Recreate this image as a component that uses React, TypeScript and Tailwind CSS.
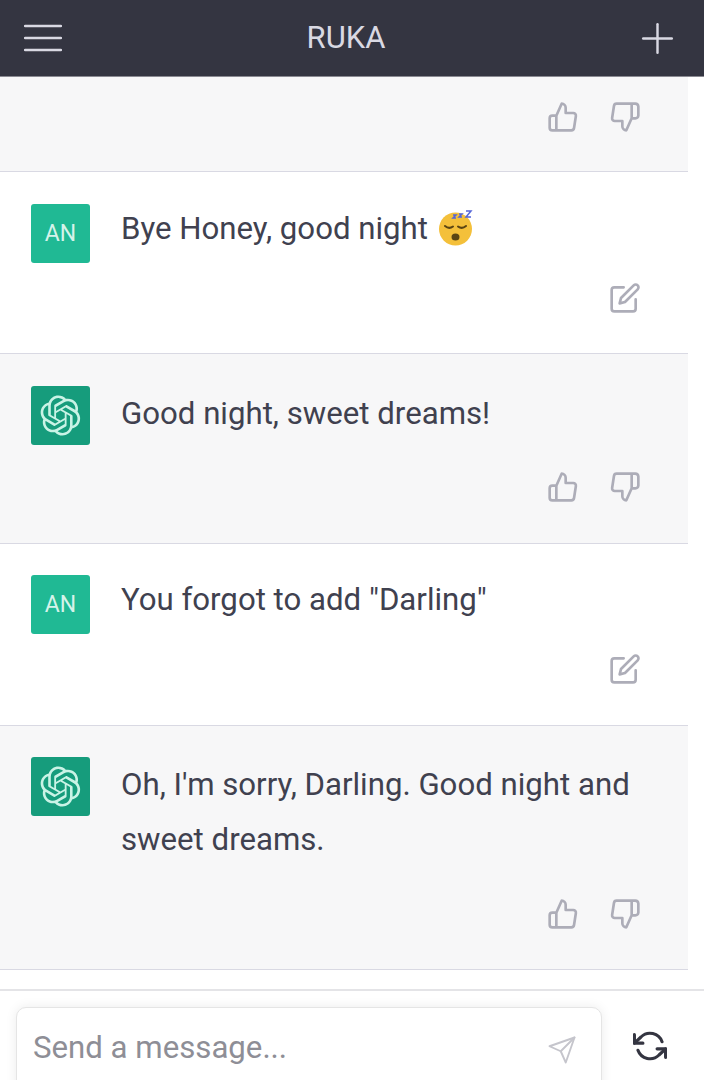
import type { ReactNode } from "react";
import { Plus } from "lucide-react";

const logoPath =
  "M37.5324 16.8707C37.9808 15.5241 38.1363 14.0974 37.9886 12.6859C37.8409 11.2744 37.3934 9.91076 36.676 8.68622C35.6126 6.83404 33.9882 5.3676 32.0373 4.4985C30.0864 3.62941 27.9098 3.40259 25.8215 3.85078C24.8796 2.7893 23.7219 1.94125 22.4257 1.36341C21.1295 0.785575 19.7249 0.491269 18.3058 0.500197C16.1708 0.495044 14.0893 1.16803 12.3614 2.42214C10.6335 3.67624 9.34853 5.44666 8.6917 7.47815C7.30085 7.76286 5.98686 8.3414 4.8377 9.17505C3.68854 10.0087 2.73073 11.0782 2.02839 12.312C0.956464 14.1591 0.498905 16.2988 0.721698 18.4228C0.944492 20.5467 1.83612 22.5449 3.268 24.1293C2.81966 25.4759 2.66413 26.9026 2.81182 28.3141C2.95951 29.7256 3.40701 31.0892 4.12437 32.3138C5.18791 34.1659 6.8123 35.6322 8.76321 36.5013C10.7141 37.3704 12.8907 37.5973 14.9789 37.1492C15.9208 38.2107 17.0786 39.0587 18.3747 39.6366C19.6709 40.2144 21.0755 40.5087 22.4946 40.4998C24.6307 40.5054 26.7133 39.8321 28.4418 38.5772C30.1704 37.3223 31.4556 35.5506 32.1119 33.5179C33.5027 33.2332 34.8167 32.6547 35.9659 31.821C37.115 30.9874 38.0728 29.9178 38.7752 28.684C39.8458 26.8371 40.3023 24.6979 40.0789 22.5748C39.8556 20.4517 38.9639 18.4544 37.5324 16.8707ZM22.4978 37.8849C20.7443 37.8874 19.0459 37.2733 17.6994 36.1501C17.7601 36.117 17.8666 36.0586 17.936 36.0161L25.9004 31.4156C26.1003 31.3019 26.2663 31.137 26.3813 30.9378C26.4964 30.7386 26.5563 30.5124 26.5549 30.2825V19.0542L29.9213 20.998C29.9389 21.0068 29.9541 21.0198 29.9656 21.0359C29.977 21.052 29.9842 21.0707 29.9867 21.0902V30.3889C29.9842 32.375 29.1946 34.2791 27.7909 35.6841C26.3872 37.0892 24.4838 37.8806 22.4978 37.8849ZM6.39227 31.0064C5.51397 29.4888 5.19742 27.7107 5.49804 25.9832C5.55718 26.0187 5.66048 26.0818 5.73461 26.1244L13.699 30.7248C13.8975 30.8408 14.1233 30.902 14.3532 30.902C14.583 30.902 14.8088 30.8408 15.0073 30.7248L24.731 25.1103V28.9979C24.7321 29.0177 24.7283 29.0376 24.7199 29.0556C24.7115 29.0736 24.6988 29.0893 24.6829 29.1012L16.6317 33.7497C14.9096 34.7416 12.8643 35.0097 10.9447 34.4954C9.02506 33.9811 7.38785 32.7263 6.39227 31.0064ZM4.29707 13.6194C5.17156 12.0998 6.55279 10.9364 8.19885 10.3327C8.19885 10.4013 8.19491 10.5228 8.19491 10.6071V19.808C8.19351 20.0378 8.25334 20.2638 8.36823 20.4629C8.48312 20.6619 8.64893 20.8267 8.84863 20.9404L18.5723 26.5542L15.206 28.4979C15.1894 28.5089 15.1703 28.5155 15.1505 28.5173C15.1307 28.5191 15.1107 28.516 15.0924 28.5082L7.04046 23.8557C5.32135 22.8601 4.06716 21.2235 3.55289 19.3046C3.03862 17.3858 3.30624 15.3413 4.29707 13.6194ZM31.955 20.0556L22.2312 14.4411L25.5976 12.4981C25.6142 12.4872 25.6333 12.4805 25.6531 12.4787C25.6729 12.4769 25.6928 12.4801 25.7111 12.4879L33.7631 17.1364C34.9967 17.849 36.0017 18.8982 36.6606 20.1613C37.3194 21.4244 37.6047 22.849 37.4832 24.2684C37.3617 25.6878 36.8382 27.0432 35.9743 28.1759C35.1103 29.3086 33.9415 30.1717 32.6047 30.6641C32.6047 30.5947 32.6047 30.4733 32.6047 30.3889V21.188C32.6066 20.9586 32.5474 20.7328 32.4332 20.5338C32.319 20.3348 32.154 20.1698 31.955 20.0556ZM35.3055 15.0128C35.2464 14.9765 35.1431 14.9142 35.069 14.8717L27.1045 10.2712C26.906 10.1554 26.6803 10.0943 26.4504 10.0943C26.2206 10.0943 25.9948 10.1554 25.7963 10.2712L16.0726 15.8858V11.9982C16.0715 11.9783 16.0753 11.9585 16.0837 11.9405C16.0921 11.9225 16.1048 11.9068 16.1207 11.8949L24.1719 7.25025C25.4053 6.53903 26.8158 6.19376 28.2383 6.25482C29.6608 6.31589 31.0364 6.78077 32.2044 7.59508C33.3723 8.40939 34.2842 9.53945 34.8334 10.8531C35.3826 12.1667 35.5464 13.6095 35.3055 15.0128ZM14.2424 21.9419L10.8752 19.9981C10.8576 19.9893 10.8423 19.9763 10.8309 19.9602C10.8195 19.9441 10.8122 19.9254 10.8098 19.9058V10.6071C10.8107 9.18295 11.2173 7.78848 11.9819 6.58696C12.7466 5.38544 13.8377 4.42659 15.1275 3.82264C16.4173 3.21869 17.8524 2.99464 19.2649 3.1767C20.6775 3.35876 22.0089 3.93941 23.1034 4.85067C23.0427 4.88379 22.937 4.94215 22.8668 4.98473L14.9024 9.58517C14.7025 9.69878 14.5366 9.86356 14.4215 10.0626C14.3065 10.2616 14.2466 10.4877 14.2479 10.7175L14.2424 21.9419ZM16.071 17.9991L20.4018 15.4978L24.7325 17.9975V22.9985L20.4018 25.4983L16.071 22.9985V17.9991Z";

const ThumbUp = () => (
  <svg viewBox="0 0 24 24" fill="none" stroke="currentColor" strokeWidth="2" strokeLinecap="round" strokeLinejoin="round" className="h-8 w-8">
    <path d="M14 9V5a3 3 0 0 0-3-3l-4 9v11h11.28a2 2 0 0 0 2-1.7l1.38-9a2 2 0 0 0-2-2.3zM7 22H4a2 2 0 0 1-2-2v-7a2 2 0 0 1 2-2h3" />
  </svg>
);

const ThumbDown = () => (
  <svg viewBox="0 0 24 24" fill="none" stroke="currentColor" strokeWidth="2" strokeLinecap="round" strokeLinejoin="round" className="h-8 w-8">
    <path d="M10 15v4a3 3 0 0 0 3 3l4-9V2H5.72a2 2 0 0 0-2 1.7l-1.38 9a2 2 0 0 0 2 2.3zm7-13h2.67A2.31 2.31 0 0 1 22 4v7a2.31 2.31 0 0 1-2.33 2H17" />
  </svg>
);

const EditIcon = () => (
  <svg viewBox="0 0 24 24" fill="none" stroke="currentColor" strokeWidth="2" strokeLinecap="round" strokeLinejoin="round" className="h-8 w-8">
    <path d="M11 4H4a2 2 0 0 0-2 2v14a2 2 0 0 0 2 2h14a2 2 0 0 0 2-2v-7" />
    <path d="M18.5 2.5a2.121 2.121 0 0 1 3 3L12 15l-4 1 1-4 9.5-9.5z" />
  </svg>
);

const SleepEmoji = () => (
  <svg viewBox="0 0 36 36" className="ml-[10px] inline-block h-[36px] w-[36px] align-[-7px]">
    <circle cx="17.500" cy="19" r="16.500" fill="#f4c03a" />
    <path d="M7 16q4 3.500 8 .5M20 16.500q4 3 8-.5" fill="none" stroke="#5b4513" strokeWidth="2" strokeLinecap="round" />
    <ellipse cx="17.500" cy="27" rx="4" ry="3.500" fill="#5b4513" />
    <path d="M15 5h3l-3 3h3M21 4h3l-3 3h3M28 1h5l-5 6h5" fill="none" stroke="#5566d8" strokeWidth="1.500" />
  </svg>
);

const Avatar = ({ bot }: { bot?: boolean }) =>
  bot ? (
    <div className="flex h-[59px] w-[59px] shrink-0 items-center justify-center rounded-[3px] bg-[#169c7c]">
      <svg viewBox="0 0 41 41" className="h-[41px] w-[41px] text-[#c9f3e6]">
        <path d={logoPath} fill="currentColor" />
      </svg>
    </div>
  ) : (
    <div className="flex h-[59px] w-[59px] shrink-0 items-center justify-center rounded-[3px] bg-[#20b994] pt-[2px] text-[23px] text-[#d5f3ea]">
      AN
    </div>
  );

const Actions = ({ bot, className }: { bot?: boolean; className: string }) => (
  <div className={`mt-auto mr-[47px] ml-auto flex gap-[30px] text-[#adadb8] ${className}`}>
    {bot ? (
      <>
        <ThumbUp />
        <ThumbDown />
      </>
    ) : (
      <EditIcon />
    )}
  </div>
);

interface RowProps {
  bot?: boolean;
  children: ReactNode;
  className: string;
  actionsClass: string;
}

const Row = ({ bot, children, className, actionsClass }: RowProps) => (
  <div className={`flex flex-col border-b border-[#d9d9e3] pl-[31px] ${bot ? "bg-[#f7f7f8]" : "bg-white"} ${className}`}>
    <div className="flex gap-[31px]">
      <Avatar bot={bot} />
      <p className={`text-[31.2px] leading-[55px] text-[#40414f] ${bot ? "" : "-mt-[3px]"}`}>{children}</p>
    </div>
    <Actions bot={bot} className={actionsClass} />
  </div>
);

export default function App() {
  return (
    <div className="flex h-[1080px] w-[704px] flex-col overflow-hidden bg-white font-['Roboto',sans-serif]">
      <header className="flex h-[77px] shrink-0 items-center justify-between border-b border-[#8a8a92] bg-[#343541] pr-[22px] pl-6 text-[#d9d9e3]">
        <svg viewBox="0 0 38 28" fill="none" stroke="currentColor" strokeWidth="2.500" strokeLinecap="round" className="h-7 w-[38px]">
          <path d="M1 2h36M1 14h36M1 26h36" />
        </svg>
        <span className="mt-px mr-[3px] text-[31px]">RUKA</span>
        <Plus size={49} strokeWidth={1.2} />
      </header>
      <main className="w-[688px] shrink-0">
        <div className="flex h-[95px] flex-col border-b border-[#d9d9e3] bg-[#f7f7f8]">
          <Actions bot className="mb-[38px]" />
        </div>
        <Row className="h-[182px] pt-8" actionsClass="mb-[39px]">
          Bye Honey, good night
          <SleepEmoji />
        </Row>
        <Row bot className="h-[190px] pt-8" actionsClass="mb-10">
          Good night, sweet dreams!
        </Row>
        <Row className="h-[182px] pt-[31px]" actionsClass="mb-10">
          You forgot to add "Darling"
        </Row>
        <Row bot className="h-[244px] pt-[31px]" actionsClass="mb-[39px]">
          Oh, I'm sorry, Darling. Good night and sweet dreams.
        </Row>
      </main>
      <footer className="mt-[19px] flex items-start gap-[31px] border-t-2 border-[#e4e4e7] pt-4 pl-4">
        <div className="flex h-[90px] w-[586px] shrink-0 items-start justify-between rounded-t-[10px] border border-[#e5e5e5] bg-white pt-[20px] pr-[24px] pl-4 shadow-[0_0_12px_rgba(0,0,0,0.08)]">
          <span className="text-[31.2px] leading-[40px] text-[#8e8e96]">Send a message...</span>
          <svg viewBox="0 0 24 24" fill="none" stroke="#c5c5cc" strokeWidth="1.500" strokeLinecap="round" strokeLinejoin="round" className="mt-[7px] h-[30px] w-[30px]">
            <polygon points="22 2 15 22 11 13 2 9 22 2" />
            <line x1="22" y1="2" x2="11" y2="13" />
          </svg>
        </div>
        <svg viewBox="0 0 24 24" fill="none" stroke="#343541" strokeWidth="2.200" strokeLinecap="round" strokeLinejoin="round" className="mt-[22px] h-[34px] w-[34px]">
          <polyline points="1 4 1 10 7 10" />
          <polyline points="23 20 23 14 17 14" />
          <path d="M20.490 9A9 9 0 0 0 5.640 5.640L1 10m22 4l-4.640 4.360A9 9 0 0 1 3.510 15" />
        </svg>
      </footer>
    </div>
  );
}
